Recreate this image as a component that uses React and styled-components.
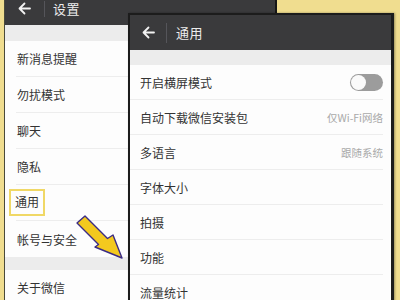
import styled, { createGlobalStyle } from "styled-components";

const GlobalStyle = createGlobalStyle`
  html, body {
    margin: 0;
    padding: 0;
    background: #f0dd8f;
    overflow: hidden;
  }
  body {
    font-family: "Noto Sans CJK SC", "Noto Sans", sans-serif;
  }
`;

const Canvas = styled.div`
  position: relative;
  width: 400px;
  height: 300px;
  overflow: hidden;
  padding-left: 4px;
  box-sizing: border-box;
  background: #f0dd8f;
`;

const Screen = styled.div`
  width: 273px;
  height: 330px;
  box-sizing: border-box;
  background: #fdfdfd;
  border-left: 1px solid #4a4a3a;
  border-right: 2px solid #161616;
`;

const FrontScreen = styled.div`
  position: absolute;
  left: 128px;
  top: 13px;
  width: 266px;
  height: 320px;
  box-sizing: border-box;
  background: #fdfdfd;
  border: 2px solid #1c1c1c;
  border-right-width: 3px;
  box-shadow: 1px 0 2px rgba(0, 0, 0, 0.35);
`;

const Header = styled.div`
  display: flex;
  align-items: center;
  height: ${(p) => p.$h}px;
  padding: 0 0 ${(p) => p.$pb || 0}px ${(p) => p.$pl}px;
  box-sizing: border-box;
  background: #3a3a3c;
  color: #ececec;
`;

const BackIcon = styled.svg`
  width: 13px;
  height: 13px;
  flex: none;
`;

const HeaderDivider = styled.div`
  width: 1px;
  height: ${(p) => p.$h}px;
  background: #55555a;
  margin: 0 ${(p) => p.$mr}px 0 ${(p) => p.$ml}px;
`;

const Title = styled.div`
  font-size: 13px;
  line-height: 16px;
  letter-spacing: 0.5px;
`;

const Band = styled.div`
  height: ${(p) => p.$h}px;
  background: #ececec;
`;

const Row = styled.div`
  display: flex;
  align-items: center;
  justify-content: space-between;
  height: ${(p) => p.$h}px;
  box-sizing: border-box;
  margin-left: ${(p) => p.$ml}px;
  margin-right: ${(p) => p.$mr || 0}px;
  padding-left: ${(p) => p.$pl}px;
  border-bottom: ${(p) => (p.$last ? "none" : "1px solid #ededed")};
  font-size: 12px;
  color: #333;
`;

const Highlight = styled.span`
  display: inline-block;
  border: 2px solid #f0d866;
  padding: 3px 4px 4px;
  margin-left: -8px;
  line-height: 16px;
`;

const Value = styled.span`
  font-size: 10.5px;
  color: #a9a9a9;
`;

const Toggle = styled.div`
  width: 33px;
  height: 17px;
  border-radius: 9px;
  background: #9c9c9c;
  padding: 1px;
  box-sizing: border-box;
`;

const Knob = styled.div`
  width: 15px;
  height: 15px;
  border-radius: 50%;
  background: #fafafa;
`;

const Pointer = styled.svg`
  position: absolute;
  left: 70px;
  top: 200px;
  width: 60px;
  height: 70px;
  overflow: visible;
`;

function Back() {
  return (
    <BackIcon viewBox="0 0 13 13" fill="none" stroke="#f2f2f2" strokeWidth="1.8" strokeLinecap="round" strokeLinejoin="round">
      <path d="M12 6.5H1.5M6.5 1.5L1.5 6.5L6.5 11.5" />
    </BackIcon>
  );
}

const leftRows = ["新消息提醒", "勿扰模式", "聊天", "隐私", "通用", "帐号与安全"];

const rightRows = [
  { label: "开启横屏模式", toggle: true },
  { label: "自动下载微信安装包", value: "仅Wi-Fi网络" },
  { label: "多语言", value: "跟随系统" },
  { label: "字体大小" },
  { label: "拍摄" },
  { label: "功能" },
  { label: "流量统计" },
];

export default function App() {
  return (
    <>
      <GlobalStyle />
      <Canvas>
        <Screen>
          <Header $h={25} $pl={13} $pb={8}>
            <Back />
            <HeaderDivider $h={16} $ml={13} $mr={8} />
            <Title>设置</Title>
          </Header>
          <Band $h={16} />
          {leftRows.map((r, i) => (
            <Row key={r} $h={36} $ml={11} $pl={1} $last={i === leftRows.length - 1}>
              {r === "通用" ? <Highlight>{r}</Highlight> : r}
            </Row>
          ))}
          <Band $h={13} />
          <Row $h={36} $ml={11} $pl={1}>关于微信</Row>
        </Screen>

        <FrontScreen>
          <Header $h={35} $pl={12}>
            <Back />
            <HeaderDivider $h={20} $ml={11} $mr={9} />
            <Title>通用</Title>
          </Header>
          <Band $h={15} />
          {rightRows.map((r) => (
            <Row key={r.label} $h={35} $ml={0} $mr={8} $pl={10}>
              <span>{r.label}</span>
              {r.toggle && (
                <Toggle>
                  <Knob />
                </Toggle>
              )}
              {r.value && <Value>{r.value}</Value>}
            </Row>
          ))}
        </FrontScreen>

        <Pointer viewBox="0 0 60 70">
          <polygon
            points="15,16 37.5,38.5 43,35 52,58 25,47 28.5,44.5 7,23"
            fill="#f3c91f"
            stroke="#3b2c86"
            strokeWidth="1.4"
            strokeLinejoin="round"
          />
        </Pointer>
      </Canvas>
    </>
  );
}
